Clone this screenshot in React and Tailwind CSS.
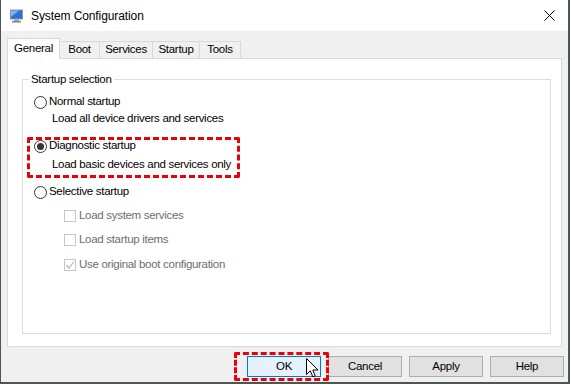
import React from "react";

const font = { fontFamily: '"Liberation Sans", Arial, sans-serif' };

const Radio = ({ checked }) => (
  <span className="w-[13px] h-[13px] rounded-full border border-[#333] bg-white flex items-center justify-center shrink-0">
    {checked && <span className="w-[7px] h-[7px] rounded-full bg-[#333]" />}
  </span>
);

const Check = ({ checked }) => (
  <span className="w-[12px] h-[12px] border border-[#c6c6c6] bg-white flex items-center justify-center shrink-0">
    {checked && (
      <svg width="10" height="10" viewBox="0 0 10 10">
        <path d="M1 5 L4 8 L9 1.5" fill="none" stroke="#b5b5b5" strokeWidth="1.2" />
      </svg>
    )}
  </span>
);

const Tab = ({ label, width, active }) =>
  active ? (
    <div
      className={`${width} h-[21px] -mb-px relative z-10 bg-white border border-b-0 border-[#d9d9d9] flex items-center justify-center pb-[1px]`}
    >
      {label}
    </div>
  ) : (
    <div
      className={`${width} h-[17px] border-t border-r border-[#d9d9d9] bg-[#f0f0f0] flex items-center justify-center`}
    >
      {label}
    </div>
  );

const Button = ({ children, primary }) => (
  <button
    className={`w-[74px] h-[21px] border text-black flex items-center justify-center ${
      primary ? "bg-[#e5f1fb] border-[#0078d7]" : "bg-[#e1e1e1] border-[#adadad]"
    }`}
  >
    {children}
  </button>
);

export default function App() {
  return (
    <div
      className="w-[571px] h-[385px] bg-white overflow-hidden text-[11.5px] tracking-[-0.3px] text-black"
      style={font}
    >
      <div className="w-[570px] h-[384px] border-l border-r-2 border-b-2 border-[#4d5752] flex flex-col">
        {/* Title bar */}
        <div className="h-[31px] bg-white flex items-center pl-[8px] shrink-0">
          <svg width="15" height="14" viewBox="0 0 15 14">
            <rect x="1" y="0.5" width="13" height="10" fill="#8c96a6" />
            <rect x="2" y="1.5" width="11" height="8" fill="#2f6fd6" />
            <path d="M2 1.5 L10 1.5 L2 8 Z" fill="#7fb2f2" />
            <rect x="5" y="10.5" width="5" height="1.5" fill="#9aa2ae" />
            <rect x="3" y="12" width="9" height="1.5" fill="#7d8590" />
          </svg>
          <span className="ml-[7px] flex-1 text-[12px] tracking-[-0.1px]">System Configuration</span>
          <svg width="11" height="11" viewBox="0 0 11 11" className="mr-[13px]">
            <path d="M0.5 0.5 L10.5 10.5 M10.5 0.5 L0.5 10.5" stroke="#000" strokeWidth="1" />
          </svg>
        </div>

        {/* Body */}
        <div className="flex-1 bg-[#f0f0f0] flex flex-col">
          <div className="pl-[6px] pr-[6px] pt-[7px] flex flex-col">
            <div className="flex items-end">
              <Tab label="General" width="w-[53px]" active />
              <Tab label="Boot" width="w-[40px]" />
              <Tab label="Services" width="w-[53px]" />
              <Tab label="Startup" width="w-[47px]" />
              <Tab label="Tools" width="w-[41px]" />
            </div>
            <div className="h-[289px] border border-[#d9d9d9] bg-white pt-[13px] pl-[14px] pr-[10px] pb-[12px]">
              <fieldset className="h-full border border-[#dcdcdc]">
                <legend className="ml-[6px] px-[2px] leading-[14px]">Startup selection</legend>
                <div className="flex flex-col">
                  <div className="h-[16px] mt-[8px] ml-[11px] flex items-center gap-[2px]">
                    <Radio />
                    <span>Normal startup</span>
                  </div>
                  <div className="h-[16px] mt-[1px] ml-[29px] flex items-center">
                    Load all device drivers and services
                  </div>
                  <div className="relative">
                    <div className="h-[16px] mt-[11px] ml-[11px] flex items-center gap-[2px]">
                      <Radio checked />
                      <span>Diagnostic startup</span>
                    </div>
                    <div className="h-[16px] mt-[3px] ml-[29px] flex items-center">
                      Load basic devices and services only
                    </div>
                    <div className="absolute left-[4px] top-[10px] w-[213px] h-[41px] border-[3px] border-dashed border-[#e8000b] rounded-[2px]" />
                  </div>
                  <div className="h-[16px] mt-[11px] ml-[11px] flex items-center gap-[2px]">
                    <Radio />
                    <span>Selective startup</span>
                  </div>
                  <div className="h-[16px] mt-[8px] ml-[41px] flex items-center gap-[3px] text-[#6d6d6d]">
                    <Check />
                    <span>Load system services</span>
                  </div>
                  <div className="h-[16px] mt-[8px] ml-[41px] flex items-center gap-[3px] text-[#6d6d6d]">
                    <Check />
                    <span>Load startup items</span>
                  </div>
                  <div className="h-[16px] mt-[9px] ml-[41px] flex items-center gap-[3px] text-[#6d6d6d]">
                    <Check checked />
                    <span>Use original boot configuration</span>
                  </div>
                </div>
              </fieldset>
            </div>
          </div>

          {/* Buttons */}
          <div className="mt-[9px] flex justify-end gap-[7px] pr-[4px]">
            <div className="relative">
              <Button primary>OK</Button>
              <div className="absolute left-[-13px] top-[-4px] w-[95px] h-[29px] border-[3px] border-dashed border-[#e8000b] rounded-[2px]" />
              <svg
                className="absolute left-[59px] top-[2px]"
                width="13"
                height="21"
                viewBox="0 0 13 21"
              >
                <path
                  d="M0.5 0.5 L0.5 16.5 L4.3 12.8 L6.8 18.8 L9.2 17.8 L6.8 12 L12 12 Z"
                  fill="#fff"
                  stroke="#000"
                  strokeWidth="1"
                  strokeLinejoin="miter"
                />
              </svg>
            </div>
            <Button>Cancel</Button>
            <Button>Apply</Button>
            <Button>Help</Button>
          </div>
        </div>
      </div>
    </div>
  );
}
